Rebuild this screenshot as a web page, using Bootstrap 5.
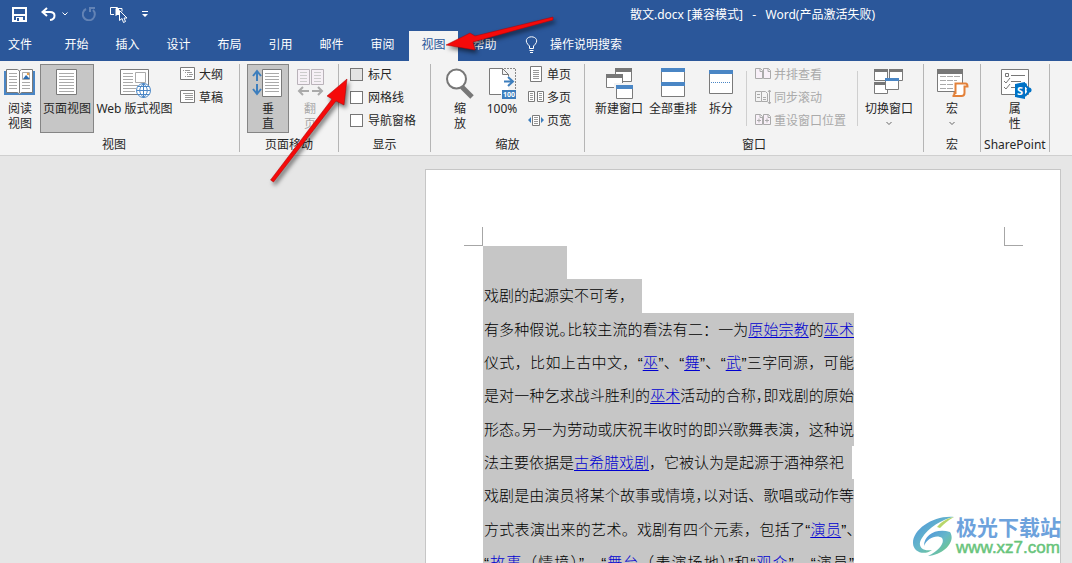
<!DOCTYPE html>
<html lang="zh-CN">
<head>
<meta charset="utf-8">
<meta name="viewport" content="width=device-width, initial-scale=1">
<title>散文.docx - Word</title>
<link rel="stylesheet" href="https://cdn.jsdelivr.net/npm/bootstrap@5.3.0/dist/css/bootstrap.min.css">
<style>
  :root { --blue:#2b579a; --ink:#262626; }
  body { font:12px/15px "Noto Sans","Noto Sans CJK SC",sans-serif; color:var(--ink); background:#e6e6e6; overflow:hidden; }
  button { font:inherit; color:inherit; background:none; border:1px solid transparent; padding:0; }
  svg { display:block; flex:none; }
  .app-head { background:var(--blue); color:#fff; }
  .titlebar { height:31px; }
  .quick { gap:12px; padding:0 10px 3px 11px; }
  .undo { gap:6px; }
  .doc-title { white-space:pre; margin-right:197px; padding-bottom:3px; }
  .tabs { height:30px; }
  .tab-link { width:49px; margin:0 1px; color:#fff; text-decoration:none; text-align:center; line-height:27px; }
  .tab-link.active { background:#f3f3f3; color:var(--blue); }
  .tab-link:first-child { text-align:left; padding-left:7px; }
  .tell { color:#fff; gap:12px; margin-left:14px; padding-bottom:3px; }
  .ribbon { background:#f3f3f3; border-bottom:1px solid #cfcfcf; padding:3px 0; }
  .rgroup { border-right:1px solid #b5b5b5; height:88px; flex:none; }
  .rbody { height:70px; }
  .rlabel { text-align:center; line-height:20px; padding-top:1px; white-space:nowrap; }
  .views .rlabel { padding-right:11px; }
  .pad7 { padding:0 7px; }
  .pad3 { padding:0 3px; }
  .big { height:69px; width:42px; display:flex; flex-direction:column; align-items:center; padding-top:2px; white-space:nowrap; }
  .big svg { width:34px; height:34px; }
  .big.wide { width:54px; }
  .big.web { width:81px; }
  .big.tall { width:40px; }
  .big.on { background:#c6c6c6; border-color:#858585; }
  .big .chev { width:6px; height:15px; }
  .stack { gap:7px; padding-top:2px; }
  .stack button, .stack label { display:flex; align-items:center; gap:3px; height:16px; white-space:nowrap; }
  .stack svg { width:16px; height:16px; }
  .stack label { gap:5px; }
  .views .stack { padding-right:15px; }
  .checks { padding-left:11px; padding-right:14px; }
  .arrange { padding-left:7px; padding-right:10px; }
  .off, .off:disabled { color:#aaa; }
  .tick { appearance:none; width:13px; height:13px; border:1px solid #767676; background:#fff; margin:0; }
  .tick.hover { background:#e4e4e4; }
  .inner-rule { border-left:1px solid #cfcfcf; height:55px; margin-top:7px; }
  .canvas { padding:13px 11px 0 0; min-height:0; }
  .sheet { width:636px; overflow:hidden; background:#fff; border:1px solid #c6c6c6; border-bottom:0; padding:57px 37px 0 38px; }
  .corner { width:19px; height:19px; border:0 solid #a6a6a6; border-bottom-width:1px; }
  .corner.l { border-right-width:1px; }
  .corner.r { border-left-width:1px; }
  .prose { margin:0 0 0 19px; color:#000; width:371px; font:300 15px/33px "Liberation Sans","Noto Sans CJK SC",sans-serif; }
  .prose p { margin:0; height:33px; background:#c6c6c6; white-space:nowrap; text-align-last:justify; padding-left:1px; }
  .prose p:nth-child(3n+2) { height:34px; }
  .prose p.ragged { text-align-last:left; width:max-content; padding-right:8px; }
  .prose p.blank { width:84px; }
  .prose a { color:#0000d0; text-decoration:underline; text-underline-offset:2px; }
  .half { font-feature-settings:"halt"; }
  .notes { position:absolute; left:0; top:0; pointer-events:none; filter:drop-shadow(2px 3px 2px #0008); }
  .brandmark { position:absolute; right:11px; bottom:6px; gap:1px; }
  .brand-name { font:700 21px/24px "Noto Sans CJK SC",sans-serif; color:#6da2dc; white-space:nowrap; }
  .brand-url { font:400 17px/19px "Liberation Sans",sans-serif; color:#68c47b; -webkit-text-stroke:.5px #68c47b; }
</style>
<script src="https://cdn.jsdelivr.net/npm/bootstrap@5.3.0/dist/js/bootstrap.bundle.min.js"></script>
</head>
<body class="position-relative vh-100 d-flex flex-column">
<header class="app-head">
  <div class="titlebar d-flex align-items-center justify-content-between">
    <div class="quick d-flex align-items-center">
      <button aria-label="保存"><svg width="15" height="15" viewBox="0 0 15 15"><path d="M1 1h13v13H1z" fill="none" stroke="#fff" stroke-width="2"/><path d="M2 7h11v2H2zM4 10h7v4H4z" fill="#fff"/><path d="M5 11h2v3H5z" fill="#2b579a"/></svg></button>
      <button class="undo d-flex align-items-center" aria-label="撤消"><svg width="15" height="14" viewBox="0 0 15 14"><path d="M6 1L1.500 5L6 9M2 5h7c6 0 6 7 0 8" fill="none" stroke="#fff" stroke-width="2"/></svg><svg width="6" height="4" viewBox="0 0 6 4"><path d="M.5.5L3 3L5.500.5" fill="none" stroke="#fff"/></svg></button>
      <button disabled aria-label="重复"><svg width="14" height="14" viewBox="0 0 14 14"><path d="M4 2A6 6 0 1 0 11 3M8 5V1h5" fill="none" stroke="#6383b5" stroke-width="2"/></svg></button>
      <button aria-label="选择"><svg width="17" height="17" viewBox="0 0 17 17"><path d="M4 8.500H.5v-7h7v2M6 10V2.500h6v3" fill="none" stroke="#fff"/><path d="M6 3h3v6H6z" fill="#fff"/><path d="M9.500 4.500v10l2.500-2l1.500 4l2-1l-1.500-3.500h3z" fill="#2b579a" stroke="#fff"/></svg></button>
      <button aria-label="自定义快速访问工具栏"><svg width="8" height="6" viewBox="0 0 8 6"><path d="M1 0h6v1H1zM1 3h6L4 6z" fill="#fff"/></svg></button>
    </div>
    <div class="doc-title">散文.docx [兼容模式]   -   Word(产品激活失败)</div>
  </div>
  <nav class="tabs d-flex">
    <a class="tab-link" href="#">文件</a><a class="tab-link" href="#">开始</a><a class="tab-link" href="#">插入</a><a class="tab-link" href="#">设计</a><a class="tab-link" href="#">布局</a><a class="tab-link" href="#">引用</a><a class="tab-link" href="#">邮件</a><a class="tab-link" href="#">审阅</a><a class="tab-link active" href="#">视图</a><a class="tab-link" href="#">帮助</a>
    <button class="tell d-flex align-items-center"><svg width="13" height="17" viewBox="0 0 13 17"><path d="M4.500 12.500V10C-1.500 5 2 .8 6.500.8S14.500 5 8.500 10v2.500zM4.500 14.500h4M5 16.500h3" fill="none" stroke="#fff"/></svg>操作说明搜索</button>
  </nav>
</header>

<section class="ribbon d-flex">
  <div class="rgroup views">
    <div class="rbody d-flex">
      <button class="big tall"><svg viewBox="0 0 34 34"><path d="M1 4h31v24H1z" fill="#4a86c5"/><path d="M3.500 2.500h11l2 1.500l2-1.500h11v23h-11l-2 1.500l-2-1.500h-11zM16.500 4v22" fill="#fff" stroke="#7a7a7a"/><path d="M6 6.500h8M6 9.500h8M6 12.500h8M6 15.500h8M6 18.500h8M6 21.500h8M19 15.500h8M19 18.500h8M19 21.500h8" stroke="#aaa"/><path d="M19.500 5.500h7v7h-7z" fill="#fff" stroke="#aaa"/><path d="M20 12l3-4l4 4z" fill="#2b6cb0"/><circle cx="25" cy="7" r="1.200" fill="#e8a04a"/></svg><span>阅读<br>视图</span></button>
      <button class="big wide on"><svg viewBox="0 0 34 34"><path d="M6.500 2.500h20v25h-20z" fill="#fff" stroke="#7a7a7a"/><path d="M9 6.500h15M9 9.500h15M9 12.500h15M9 15.500h15M9 18.500h15M9 21.500h15M9 24.500h15" stroke="#aaa"/></svg><span>页面视图</span></button>
      <button class="big web"><svg viewBox="0 0 34 34"><path d="M2.500 2.500h28v25h-28z" fill="#fff" stroke="#7a7a7a"/><path d="M5 6.500h10M5 9.500h10M5 12.500h10M5 15.500h10M5 18.500h15M5 21.500h13M5 24.500h12" stroke="#aaa"/><path d="M17.500 5.500h10v10h-10z" fill="#fff" stroke="#aaa"/><circle cx="25.500" cy="23.500" r="7" fill="#fff" stroke="#4a86c5"/><path d="M25.500 16v15M18.500 23.500h14M19.500 19.500h12M19.500 27.500h12M25.500 16.500c-5 5-5 9 0 14c5-5 5-9 0-14" fill="none" stroke="#4a86c5"/></svg><span>Web 版式视图</span></button>
      <div class="stack d-flex flex-column ms-1">
        <button><svg viewBox="0 0 16 16"><path d="M.5 1.500h14v12H.5z" fill="#fff" stroke="#7a7a7a"/><path d="M3 4.500h1M5 4.500h5M5 6.500h1M7 6.500h5M7 8.500h1M9 8.500h4M5 10.500h1M7 10.500h5" stroke="#999"/></svg>大纲</button>
        <button><svg viewBox="0 0 16 16"><path d="M.5 1.500h14v12H.5z" fill="#fff" stroke="#7a7a7a"/><path d="M3 4.500h10M5 6.500h8M5 8.500h8M5 10.500h8" stroke="#999"/></svg>草稿</button>
      </div>
    </div>
    <div class="rlabel">视图</div>
  </div>

  <div class="rgroup pad7">
    <div class="rbody d-flex">
      <button class="big on"><svg viewBox="0 0 34 34"><path d="M11.500 2.500h19v27h-19z" fill="#fff" stroke="#7a7a7a"/><path d="M14 6.500h14M14 9.500h14M14 12.500h14M14 15.500h14M14 18.500h14M14 21.500h14M14 24.500h14" stroke="#aaa"/><path d="M6 14V5M2 9l4-5l4 5M6 17v9M2 22l4 5l4-5" fill="none" stroke="#3d7ebd" stroke-width="2"/></svg><span>垂<br>直</span></button>
      <button class="big off" disabled><svg viewBox="0 0 34 34"><path d="M4.500 2.500h12v15h-12zM18.500 2.500h12v15h-12z" fill="#f6f0f6" stroke="#b9b2b9"/><path d="M7 5.500h7M7 8.500h7M7 11.500h7M7 14.500h7M21 5.500h7M21 8.500h7M21 11.500h7M21 14.500h7" stroke="#ccc"/><path d="M16 24H6M10 20l-4 4l4 4M19 24h10M25 20l4 4l-4 4" fill="none" stroke="#aaa" stroke-width="2"/></svg><span>翻<br>页</span></button>
    </div>
    <div class="rlabel">页面移动</div>
  </div>

  <div class="rgroup">
    <div class="rbody d-flex">
      <div class="stack checks d-flex flex-column">
        <label for="c1"><input class="tick hover" type="checkbox" id="c1">标尺</label>
        <label for="c2"><input class="tick" type="checkbox" id="c2">网格线</label>
        <label for="c3"><input class="tick" type="checkbox" id="c3">导航窗格</label>
      </div>
    </div>
    <div class="rlabel">显示</div>
  </div>

  <div class="rgroup px-2">
    <div class="rbody d-flex">
      <button class="big"><svg viewBox="0 0 34 34"><path d="M19 20l10 10" stroke="#777" stroke-width="5"/><circle cx="13.500" cy="12" r="9.500" fill="#fff" stroke="#777" stroke-width="2"/></svg><span>缩<br>放</span></button>
      <button class="big"><svg viewBox="0 0 34 34"><path d="M16 27.500H4.500V1.500h13l6 6v15" fill="#fff"/><path d="M16 27.500H4.500V1.500h13l6 6v2" fill="none" stroke="#7a7a7a"/><path d="M17.500 1.500v6h6z" fill="#f3f3f3" stroke="#7a7a7a"/><path d="M19 1.500h11.500V22" fill="none" stroke="#888" stroke-dasharray="2 1"/><path d="M19 14.500h8M23 10l5 4.500l-5 4.500" fill="none" stroke="#3d7ebd" stroke-width="2"/><path d="M17 23h14v9H17z" fill="#3d7ebd"/><text x="18" y="30" font-size="7" font-weight="700" fill="#fff">100</text></svg><span>100%</span></button>
      <div class="stack d-flex flex-column ms-1 pe-1">
        <button><svg viewBox="0 0 16 16"><path d="M2.500.5h11v15h-11z" fill="#fff" stroke="#7a7a7a"/><path d="M5 4.500h6M5 6.500h6M5 8.500h6M5 10.500h6M5 12.500h6" stroke="#999"/></svg>单页</button>
        <button><svg viewBox="0 0 16 16"><path d="M.5 2.500h6v10h-6zM9.500 2.500h6v10h-6z" fill="#fff" stroke="#7a7a7a"/><path d="M2 4.500h3M2 6.500h3M2 8.500h3M2 10.500h3M11 4.500h3M11 6.500h3M11 8.500h3M11 10.500h3" stroke="#999"/></svg>多页</button>
        <button><svg viewBox="0 0 16 16"><path d="M4.500 3.500h7v10h-7z" fill="#fff" stroke="#7a7a7a"/><path d="M6 5.500h4M6 7.500h4M6 9.500h4M6 11.500h4" stroke="#999"/><path d="M3 5v6L0 8zM13 5v6l3-3z" fill="#3d7ebd"/></svg>页宽</button>
      </div>
    </div>
    <div class="rlabel">缩放</div>
  </div>

  <div class="rgroup pad7">
    <div class="rbody d-flex">
      <button class="big wide"><svg viewBox="0 0 34 34"><g fill="#fff" stroke="#7a7a7a"><path d="M13.500 1.500h16v13h-16z"/><path d="M4.500 7.500h16v13h-16z"/></g><path d="M13 1h17v4H13zM4 7h17v4H4z" fill="#777"/><path d="M12 16h20v16H12z" fill="#f3f3f3"/><path d="M14.500 18.500h16v13h-16z" fill="#fff" stroke="#7a7a7a"/><path d="M14 18h17v4H14z" fill="#4a86c5"/></svg><span>新建窗口</span></button>
      <button class="big wide"><svg viewBox="0 0 34 34"><path d="M5.500 1.500h23v28h-23z" fill="#fff" stroke="#7a7a7a"/><path d="M5 1h24v4H5zM5 15h24v4H5z" fill="#4a86c5"/></svg><span>全部重排</span></button>
      <button class="big"><svg viewBox="0 0 34 34"><path d="M5.500 3.500h23v23h-23z" fill="#fff" stroke="#7a7a7a"/><path d="M5 3h24v4H5z" fill="#4a86c5"/><path d="M7 15.500h20" stroke="#4a86c5" stroke-dasharray="1 1"/></svg><span>拆分</span></button>
      <div class="inner-rule ms-1"></div>
      <div class="stack arrange d-flex flex-column">
        <button class="off" disabled><svg viewBox="0 0 16 16"><path d="M.5 2.500h5l2 2v8h-7zM8.500 2.500h5l2 2v8h-7zM5 2.500v3h3M13 2.500v3h3" fill="#f8f0f8" stroke="#aaa"/></svg>并排查看</button>
        <button class="off" disabled><svg viewBox="0 0 16 16"><path d="M.5 2.500h6v10h-6zM6.500 2.500h4l2 2v8h-6M14.500 1v14M13 3l1.500-2L16 3M13 13l1.500 2L16 13M2 5.500h3M2 8.500h3M8 8.500h3M8 10.500h3" fill="none" stroke="#aaa"/></svg>同步滚动</button>
        <button class="off" disabled><svg viewBox="0 0 16 16"><path d="M.5 2.500h5l2 2v8h-7zM8.500 2.500h5l2 2v8h-7zM5 2.500v3h3M13 2.500v3h3M2 8.500h4M4 6.500v4M10 8.500h4M12 6.500v4" fill="#f8f0f8" stroke="#aaa"/></svg>重设窗口位置</button>
      </div>
      <div class="inner-rule"></div>
      <button class="big wide ms-1"><svg viewBox="0 0 34 34"><g fill="#fff" stroke="#7a7a7a"><path d="M2.500 2.500h13v11h-13zM17.500 2.500h13v11h-13zM2.500 15.500h13v11h-13z"/></g><path d="M2 2h14v3H2zM17 2h14v3H17zM2 15h11v3H2z" fill="#777"/><path d="M13.500 11.500h13v11h-13z" fill="#fff" stroke="#7a7a7a"/><path d="M13 11h14v3H13z" fill="#4a86c5"/></svg><span>切换窗口</span><svg class="chev" viewBox="0 0 6 15"><path d="M.5 6L3 8.500L5.500 6" fill="none" stroke="#666"/></svg></button>
    </div>
    <div class="rlabel">窗口</div>
  </div>

  <div class="rgroup pad7">
    <div class="rbody d-flex">
      <button class="big"><svg viewBox="0 0 34 34"><path d="M2.500 2.500h25v22h-25z" fill="#fff" stroke="#7a7a7a"/><path d="M2 2h26v5H2z" fill="#777"/><path d="M5 9.500h20M5 13.500h17M5 17.500h14M5 21.500h14" stroke="#aaa" stroke-dasharray="6 1"/><path d="M20.500 26V16.500h10q2 0 2 3h-3V26q0 3-3 3h-9q2 0 2-3z" fill="#fff" stroke="#e3813a" stroke-width="2"/></svg><span>宏</span><svg class="chev" viewBox="0 0 6 15"><path d="M.5 6L3 8.500L5.500 6" fill="none" stroke="#666"/></svg></button>
    </div>
    <div class="rlabel">宏</div>
  </div>

  <div class="rgroup pad3">
    <div class="rbody d-flex justify-content-center">
      <button class="big"><svg viewBox="0 0 34 34"><path d="M3.500 2.500h27v25h-27z" fill="#fff" stroke="#7a7a7a"/><path d="M7.500 6.500h3v3h-3zM13 8.500h14M13 14.500h10M13 20.500h6M6 14l2 2l4-5M6 20l2 2l4-5" fill="none" stroke="#777"/><path d="M27 18l5 5l-5 6" fill="#fff" stroke="#0072c6" stroke-width="2"/><circle cx="31" cy="23" r="2.500" fill="#0072c6"/><circle cx="27" cy="18" r="2" fill="#0072c6"/><path d="M17 17l10-2v17l-10-2z" fill="#0072c6"/><text x="19" y="28" font-size="11" font-weight="700" fill="#fff">S</text></svg><span>属<br>性</span></button>
    </div>
    <div class="rlabel">SharePoint</div>
  </div>
</section>

<main class="canvas d-flex justify-content-end flex-grow-1">
  <article class="sheet">
    <div class="d-flex justify-content-between"><div class="corner l"></div><div class="corner r"></div></div>
    <div class="prose">
      <p class="ragged blank">&nbsp;</p>
      <p class="ragged">戏剧的起源实不可考，</p>
      <p>有多种假说<span class="half">。</span>比较主流的看法有二：一为<a href="#">原始宗教</a>的<a href="#">巫术</a></p>
      <p>仪式，比如上古中文，“<a href="#">巫</a>”、“<a href="#">舞</a>”、“<a href="#">武</a>”三字同源，可能</p>
      <p>是对一种乞求战斗胜利的<a href="#">巫术</a>活动的合称<span class="half">，</span>即戏剧的原始</p>
      <p>形态<span class="half">。</span>另一为劳动或庆祝丰收时的即兴歌舞表演，这种说</p>
      <p class="ragged">法主要依据是<a href="#">古希腊戏剧</a>，它被认为是起源于酒神祭祀</p>
      <p>戏剧是由演员将某个故事或情境<span class="half">，</span>以对话、歌唱或动作等</p>
      <p>方式表演出来的艺术。戏剧有四个元素，包括了“<a href="#">演员</a>”<span class="half">、</span></p>
      <p>“<a href="#">故事</a>（情境）”、“<a href="#">舞台</a>（表演场地）”和“<a href="#">观众</a>”、“演员”</p>
    </div>
  </article>
</main>

<svg class="notes" width="580" height="200" viewBox="0 0 580 200"><g fill="#f50a0a" stroke="#a00" stroke-width=".5"><path d="M270.500 180L332 99L327 96L347 79L344 105L336 101L273.500 182z"/><path d="M553 17L475 36L470 33L446 45L475 50L473 42L553 20z"/></g></svg>

<div class="brandmark d-flex align-items-center">
  <svg width="44" height="40" viewBox="0 2 42 40"><defs><linearGradient id="g" x1="0" y1="0" x2="1" y2="1"><stop offset="0" stop-color="#4b8fe0"/><stop offset=".5" stop-color="#66b8c8"/><stop offset="1" stop-color="#72cf6a"/></linearGradient></defs><path d="M42 3C22 1 1 15 1 29C1 38 12 42 20 36C9 38 5 31 10 24C16 14 30 5 42 3z" fill="url(#g)"/><path d="M12 32C12 21 24 14 38 18C44 27 33 40 16 42C28 36 33 28 30 24C25 20 15 24 12 32z" fill="url(#g)"/><path d="M25 13C30 7 36 4 42 3C36 6 32 10 28 14z" fill="#b8d66a"/></svg>
  <div><div class="brand-name">极光下载站</div><div class="brand-url">www.xz7.com</div></div>
</div>
</body>
</html>
